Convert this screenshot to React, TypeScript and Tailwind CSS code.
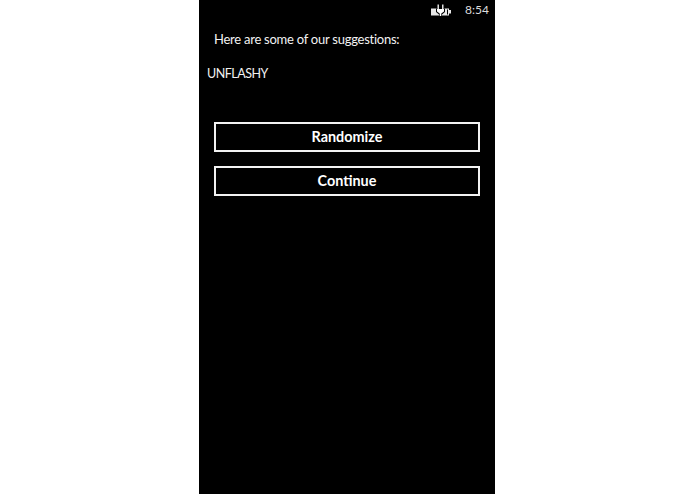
export default function App() {
  return (
    <div className="flex h-[494px] w-[695px] justify-center bg-white font-['Lato','Noto_Sans',sans-serif] text-white">
      <div className="ml-[-1px] flex w-[296px] flex-col bg-black">
        <div className="flex h-[19px] items-center justify-end pr-[6px]">
          <svg width="20" height="12" viewBox="0 0 20 12" className="mr-[14px]">
            <path d="M0 4.5H5.5V6.5H13.5V4.5H18V6H20V9.5H18V11.5H0Z" fill="#e8e8e8" />
            <path d="M16 5.5H17V10.5H16Z" fill="#000" />
            <path d="M5 5H14V8L11 10.5V12H8V10.5L5 8Z" fill="#000" />
            <path d="M7.2 0.5V5M11.8 0.5V5" stroke="#fff" strokeWidth="1.3" />
            <path d="M6 5H13V7.5L10.3 9.5V12H8.7V9.5L6 7.5Z" fill="#fff" />
          </svg>
          <span className="text-[12px] leading-[19px] text-[#dddddd]">8:54</span>
        </div>
        <p className="mt-[12px] pl-[15px] text-[13px] leading-[17px] tracking-[-0.25px] text-[#f2f2f2]">Here are some of our suggestions:</p>
        <p className="mt-[17px] pl-[8px] text-[12.5px] leading-[18px] tracking-[-0.5px] text-[#f2f2f2]">UNFLASHY</p>
        <div className="mt-[39px] flex flex-col gap-[14px] pl-[15px]">
          <button className="h-[30px] w-[266px] border-2 border-[#f2f2f2] text-[14.4px] font-bold text-white">Randomize</button>
          <button className="h-[30px] w-[266px] border-2 border-[#f2f2f2] text-[14.4px] font-bold text-white">Continue</button>
        </div>
      </div>
    </div>
  );
}
